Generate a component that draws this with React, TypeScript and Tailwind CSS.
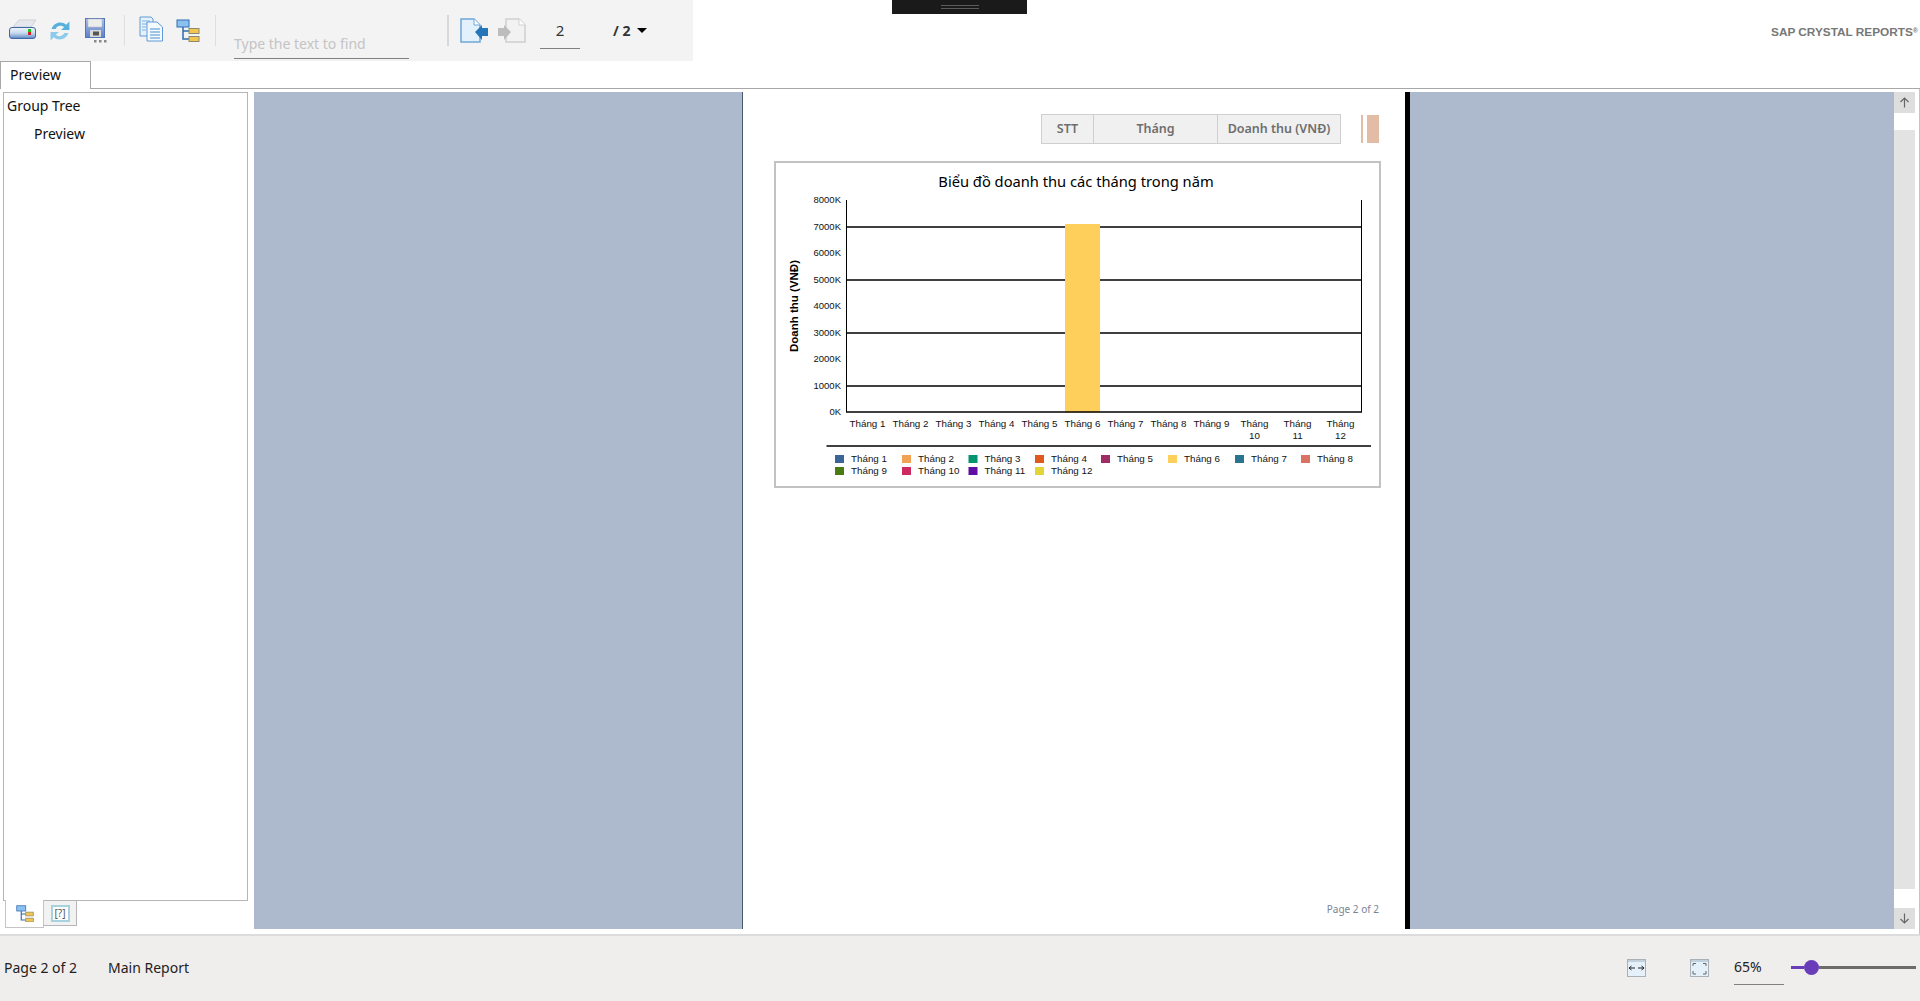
const sans = "font-['Noto_Sans','Open_Sans',sans-serif]";
const arial = "font-['Liberation_Sans',Arial,sans-serif]";

const months = ['Tháng 1', 'Tháng 2', 'Tháng 3', 'Tháng 4', 'Tháng 5', 'Tháng 6', 'Tháng 7', 'Tháng 8', 'Tháng 9', 'Tháng 10', 'Tháng 11', 'Tháng 12'];
const colors = ['#3b6497', '#f0a354', '#00956f', '#e05a1d', '#a02c65', '#ffcf5c', '#2a748f', '#db7163', '#4a7a12', '#cc2a60', '#5c0fa0', '#e3d535'];
const legendX = [835, 902, 968.5, 1035, 1101, 1168, 1235, 1301];

function PrinterIcon() {
  return (
    <svg width="30" height="24" viewBox="0 0 30 24">
      <defs>
        <linearGradient id="printerBody" x1="0" y1="0" x2="0" y2="1">
          <stop offset="0" stopColor="#f2f6fa" />
          <stop offset="0.5" stopColor="#c9daf0" />
          <stop offset="1" stopColor="#5f86c0" />
        </linearGradient>
      </defs>
      <path d="M5 9 L11 2 H28 L23 9 Z" fill="#e4e8ec" stroke="#cdd1d5" />
      <rect x="1.5" y="9.5" width="26" height="11" rx="2.5" fill="url(#printerBody)" stroke="#3f68a8" />
      <rect x="20" y="11" width="3" height="3" fill="#1fc01f" />
      <rect x="20" y="14" width="3" height="3" fill="#d02020" />
    </svg>
  );
}

function RefreshIcon() {
  return (
    <svg width="25" height="22" viewBox="2.5 0.5 20 21">
      <path d="M4 9 C6 3 13 1 18 5 L21 2 V10 H13 L16 7.5 C13 5 9 6 8 9 Z" fill="#58b0dc" />
      <path d="M20 13 C18 19 11 21 6 17 L3 20 V12 H11 L8 14.5 C11 17 15 16 16 13 Z" fill="#8ccbea" />
    </svg>
  );
}

function SaveIcon() {
  return (
    <svg width="26" height="26" viewBox="0 0 26 26">
      <defs>
        <linearGradient id="saveBody" x1="0" y1="0" x2="0" y2="1">
          <stop offset="0" stopColor="#a9bfe8" />
          <stop offset="1" stopColor="#5f80c8" />
        </linearGradient>
      </defs>
      <rect x="0.5" y="0.5" width="19" height="19" fill="url(#saveBody)" stroke="#5577b8" />
      <rect x="3" y="1" width="14" height="8" fill="#ececec" stroke="#b8b8b8" strokeWidth="0.5" />
      <rect x="5" y="12" width="11" height="7" fill="#d8d8d8" />
      <rect x="8" y="13.5" width="6" height="4" fill="#555" />
      <rect x="9" y="22" width="2.5" height="2.5" fill="#888" />
      <rect x="14" y="22" width="2.5" height="2.5" fill="#888" />
      <rect x="19" y="22" width="2.5" height="2.5" fill="#888" />
    </svg>
  );
}

function PagesIcon() {
  return (
    <svg width="25" height="26" viewBox="0 0 25 26">
      <path d="M1 1 H12 L14 3 V20 H1 Z" fill="#e6f1fb" stroke="#5f9bd6" />
      <path d="M3 5 H11 M3 8 H11 M3 11 H7 M3 14 H7" stroke="#7fb2e2" />
      <path d="M8 6 H18 L23.5 11 V25 H8 Z" fill="#f4f9fe" stroke="#5f9bd6" />
      <path d="M11 13 H21 M11 16 H21 M11 19 H21 M11 22 H21" stroke="#4a8fd0" strokeWidth="1.2" />
    </svg>
  );
}

function TreeIcon({ scale = 1 }: { scale?: number }) {
  return (
    <svg width={24 * scale} height={23 * scale} viewBox="0 0 24 23">
      <rect x="1" y="1" width="12" height="7" fill="#8cc0f0" stroke="#2f6cb0" />
      <path d="M7 8 V20 H13 M7 12 H13" fill="none" stroke="#2f6cb0" strokeWidth="1.5" />
      <rect x="13" y="9.5" width="10" height="5" fill="#f4c64e" stroke="#8a8a70" />
      <rect x="13" y="17.5" width="10" height="5" fill="#f4c64e" stroke="#8a8a70" />
    </svg>
  );
}

function PageArrowIcon({ active }: { active: boolean }) {
  const stroke = active ? '#6fa8d8' : '#d0d0d0';
  const fill = active ? '#e3f1fc' : '#f2f2f2';
  const arrow = active ? '#2476b8' : '#bdbdbd';
  return (
    <svg width="29" height="25" viewBox="0 0 29 25">
      {active ? (
        <>
          <path d="M1 1 H14 L20 7 V24 H1 Z" fill={fill} stroke={stroke} strokeWidth="1.5" />
          <path d="M14 1 V7 H20" fill="#fff" stroke={stroke} />
          <path d="M15 14 L22 7 V10 H28 V18 H22 V22 Z" fill={arrow} />
        </>
      ) : (
        <>
          <path d="M9 1 H22 L28 7 V24 H9 Z" fill={fill} stroke={stroke} strokeWidth="1.5" />
          <path d="M22 1 V7 H28" fill="#fff" stroke={stroke} />
          <path d="M14 14 L7 7 V10 H1 V18 H7 V22 Z" fill={arrow} />
        </>
      )}
    </svg>
  );
}

function FitIcon({ kind }: { kind: 'width' | 'page' }) {
  return (
    <svg width="19" height="18" viewBox="0 0 19 18">
      <rect x="0.5" y="0.5" width="18" height="17" fill="#e4f1fb" stroke="#a8b0b8" />
      <rect x="1" y="1" width="17" height="2" fill="#c0d0dc" />
      {kind === 'width' ? (
        <path d="M2 9 H8 M2 9 L4.5 7 M2 9 L4.5 11 M11 9 H17 M17 9 L14.5 7 M17 9 L14.5 11" stroke="#222" fill="none" />
      ) : (
        <path d="M3 7 V4.5 H6 M13 4.5 H16 V7 M16 12 V15 H13 M6 15 H3 V12" stroke="#666" fill="none" />
      )}
    </svg>
  );
}

function Toolbar() {
  return (
    <div className={`flex w-[693px] h-[61px] bg-[#f3f3f3] items-start ${sans}`}>
      <div className="ml-[8px] mt-[18px]"><PrinterIcon /></div>
      <div className="ml-[10px] mt-[20px]"><RefreshIcon /></div>
      <div className="ml-[12px] mt-[18px]"><SaveIcon /></div>
      <div className="ml-[13px] mt-[15px] w-px h-[31px] bg-[#dedede]" />
      <div className="ml-[14px] mt-[16px]"><PagesIcon /></div>
      <div className="ml-[12px] mt-[19px]"><TreeIcon /></div>
      <div className="ml-[15px] mt-[15px] w-px h-[31px] bg-[#dedede]" />
      <div className="ml-[18px] mt-[33px] w-[175px] h-[26px] border-b border-[#808080] text-[14px] leading-[22px] text-[#c4c4c4]">Type the text to find</div>
      <div className="ml-[38px] mt-[15px] w-[2px] h-[31px] bg-[#d8d8d8]" />
      <div className="ml-[11px] mt-[18px]"><PageArrowIcon active /></div>
      <div className="ml-[8px] mt-[18px]"><PageArrowIcon active={false} /></div>
      <div className="ml-[14px] mt-[19px] w-[40px] h-[30px] border-b border-[#808080] text-center text-[15px] leading-[22px] text-[#333]">2</div>
      <div className="ml-[33px] mt-[20px] text-[14px] leading-[22px] font-bold text-[#333]">/ 2</div>
      <div className="ml-[7px] mt-[28px] w-0 h-0 border-x-[5px] border-x-transparent border-t-[5px] border-t-black" />
    </div>
  );
}

function Chart() {
  const grid = [227, 280, 333, 386];
  const yLabels = [[200, '8000K'], [227, '7000K'], [253, '6000K'], [280, '5000K'], [306, '4000K'], [333, '3000K'], [359, '2000K'], [386, '1000K'], [412, '0K']] as const;
  return (
    <div className="mt-[17px] ml-[31px] w-[607px] h-[327px] border-2 border-[#c2c2c2] bg-white">
      <svg width="603" height="323" viewBox="776 163 603 323" className={arial}>
        <text x="1076" y="187" textAnchor="middle" fontSize="14.7" fontWeight="400" fill="#000" className={sans}>Biểu đồ doanh thu các tháng trong năm</text>
        <text x="0" y="0" transform="translate(798 306) rotate(-90)" textAnchor="middle" fontSize="11.5" fontWeight="700" fill="#000">Doanh thu (VNĐ)</text>
        {yLabels.map(([y, label]) => (
          <text key={label} x="841" y={y + 3} textAnchor="end" fontSize="9.5" fill="#111">{label}</text>
        ))}
        {grid.map((y) => <line key={y} x1="846" x2="1361" y1={y} y2={y} stroke="#000" strokeWidth="1.5" />)}
        <rect x="1065" y="224" width="35" height="188.5" fill="#ffcf5c" />
        <line x1="846.5" x2="846.5" y1="200" y2="412" stroke="#000" />
        <line x1="1361.5" x2="1361.5" y1="200" y2="412" stroke="#000" />
        <line x1="846" x2="1362" y1="412" y2="412" stroke="#000" strokeWidth="1.5" />
        {months.map((m, i) => {
          const x = 867.5 + 43 * i;
          const [word, num] = m.split(' ');
          return i < 9 ? (
            <text key={m} x={x} y="427" textAnchor="middle" fontSize="9.8" fill="#111">{m}</text>
          ) : (
            <text key={m} textAnchor="middle" fontSize="9.8" fill="#111">
              <tspan x={x} y="427">{word}</tspan>
              <tspan x={x} y="439">{num}</tspan>
            </text>
          );
        })}
        <line x1="826.5" x2="1371" y1="446" y2="446" stroke="#000" strokeWidth="1.5" />
        {months.map((m, i) => {
          const x = legendX[i % 8];
          const y = i < 8 ? 455 : 467;
          return (
            <g key={m}>
              <rect x={x} y={y} width="9" height="8" fill={colors[i]} />
              <text x={x + 16} y={y + 7} fontSize="9.8" fill="#111">{m}</text>
            </g>
          );
        })}
      </svg>
    </div>
  );
}

function ReportPage() {
  return (
    <div className="ml-[488px] w-[668px] bg-white border-l border-[#4a5a70] border-r-[5px] border-r-black flex flex-col">
      <div className="flex items-start mt-[22px] ml-[298px]">
        <div className={`flex w-[300px] h-[30px] bg-[#f0f0f0] border border-[#cfcfcf] text-[12.5px] font-semibold text-[#6e6e6e] ${sans}`}>
          <div className="w-[52px] border-r border-[#cfcfcf] flex items-center justify-center">STT</div>
          <div className="w-[124px] border-r border-[#cfcfcf] flex items-center justify-center">Tháng</div>
          <div className="flex-1 flex items-center justify-center">Doanh thu (VNĐ)</div>
        </div>
        <div className="ml-[20px] mt-px w-[2px] h-[28px] bg-[#e3bca6]" />
        <div className="ml-[4px] mt-px w-[12px] h-[28px] bg-[#e3bca6]" />
      </div>
      <Chart />
      <div className={`mt-auto mb-[13px] pr-[26px] text-right text-[10px] leading-[14px] text-[#7a8494] ${sans}`}>Page 2 of 2</div>
    </div>
  );
}

function ScrollBar() {
  return (
    <div className="ml-auto w-[21px] flex flex-col bg-[#e3e3e3]">
      <div className="h-[21px] bg-[#dedede] flex items-center justify-center">
        <svg width="11" height="11" viewBox="0 0 11 11"><path d="M5.5 10.5 V1 M1.5 5 L5.5 1 L9.5 5" fill="none" stroke="#666" strokeWidth="1.2" /></svg>
      </div>
      <div className="h-[17px] bg-white" />
      <div className="flex-1" />
      <div className="h-[19px] bg-white" />
      <div className="h-[21px] bg-[#dedede] flex items-center justify-center">
        <svg width="11" height="11" viewBox="0 0 11 11"><path d="M5.5 0.5 V10 M1.5 6 L5.5 10 L9.5 6" fill="none" stroke="#666" strokeWidth="1.2" /></svg>
      </div>
    </div>
  );
}

function TreePanel() {
  return (
    <div className={`w-[245px] ml-[3px] flex flex-col text-[14px] text-[#111] ${sans}`}>
      <div className="flex-1 border border-[#b5b5b5] bg-white pl-[3px]">
        <div className="mt-[3px] leading-[20px]">Group Tree</div>
        <div className="mt-[8px] ml-[27px] leading-[20px] text-[14px]">Preview</div>
      </div>
      <div className="h-[28px] flex items-start">
        <div className="ml-[2px] w-[39px] h-[28px] -mt-px bg-white border-x border-b border-[#c4c4c4] flex items-center justify-center"><TreeIcon scale={0.75} /></div>
        <div className="w-[33px] h-[25px] border-r border-b border-[#b5b5b5] bg-[#f2f2f2] flex items-center justify-center">
          <div className="w-[19px] h-[17px] border-2 border-[#a9d2e0] bg-white text-[10px] leading-[13px] text-center text-[#555]">[?]</div>
        </div>
      </div>
    </div>
  );
}

function StatusBar() {
  return (
    <div className={`flex-1 bg-[#f0eded] border-t-2 border-[#dcdcdc] pb-[2px] flex items-center text-[14px] text-[#222] ${sans}`}>
      <span className="ml-[4px]">Page 2 of 2</span>
      <span className="ml-[31px]">Main Report</span>
      <div className="ml-auto"><FitIcon kind="width" /></div>
      <div className="ml-[44px]"><FitIcon kind="page" /></div>
      <div className="ml-[25px] w-[50px] h-[30px] leading-[24px] border-b border-[#808080] mt-[5px]">65%</div>
      <div className="ml-[7px] mr-[4px] w-[125px] flex items-center">
        <div className="w-[13px] h-[3px] bg-[#6a3db8]" />
        <div className="w-[15px] h-[15px] rounded-full bg-[#6a3db8]" />
        <div className="flex-1 h-[3px] bg-[#6b6b6b]" />
      </div>
    </div>
  );
}

export default function App() {
  return (
    <div className="w-[1920px] h-[1001px] bg-white flex flex-col overflow-hidden">
      <div className="flex h-[61px] shrink-0 items-start">
        <Toolbar />
        <div className="ml-[199px] w-[135px] h-[14px] bg-[#1a1a1a] flex flex-col items-center justify-center gap-[2px]">
          <div className="w-[38px] h-px bg-[#5a5a5a]" />
          <div className="w-[38px] h-px bg-[#5a5a5a]" />
        </div>
        <div className={`ml-auto mr-[2px] mt-[25px] text-[11.8px] leading-[14px] font-bold text-[#777] ${arial}`}>SAP CRYSTAL REPORTS<sup className="text-[7px]">®</sup></div>
      </div>
      <div className="h-[28px] shrink-0 border-b border-[#a8a8a8] flex">
        <div className={`w-[91px] h-[28px] border-t border-r border-l border-[#a8a8a8] bg-white pl-[9px] text-[14px] leading-[25px] text-[#111] ${sans}`}>Preview</div>
      </div>
      <div className="h-[845px] shrink-0 flex border-r border-[#c4c4c4] pb-[5px] pt-[3px]">
        <TreePanel />
        <div className="ml-[6px] w-[1661px] flex bg-[#adb9cc]">
          <ReportPage />
          <ScrollBar />
        </div>
      </div>
      <StatusBar />
    </div>
  );
}
